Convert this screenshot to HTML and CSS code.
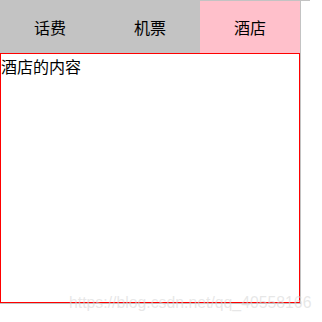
FILE: index.html
```html
<!DOCTYPE html>
<html lang="zh-CN">
<head>
    <meta charset="UTF-8">
    <title>Tab</title>
    <link rel="stylesheet" href="styles.css">
</head>
<body>
    <div class="top-line"></div>
    <div class="tab-box">
        <ul class="tab-list">
            <li class="tab">话费</li>
            <li class="tab">机票</li>
            <li class="tab active">酒店</li>
        </ul>
        <div class="tab-content">酒店的内容</div>
    </div>
    <div class="watermark">https://blog.csdn.net/qq_40558166</div>
</body>
</html>
```

FILE: styles.css
```css
body {
    margin: 0;
    font-family: "Noto Sans CJK SC", "Microsoft YaHei", sans-serif;
    font-size: 16px;
    color: #000;
    background: #fff;
}

.top-line {
    width: 310px;
    height: 1px;
    background-color: #c3c3c3;
}

.tab-box {
    width: 300px;
    border-right: 1px solid #c3c3c3;
    border-bottom: 1px solid #c3c3c3;
}

.tab-list {
    display: flex;
    margin: 0;
    padding: 0;
    list-style: none;
    background-color: #c3c3c3;
}

.tab {
    width: 100px;
    height: 52px;
    line-height: 52px;
    text-align: center;
}

.tab.active {
    background-color: pink;
}

.tab-content {
    height: 248px;
    border: 1px solid red;
    line-height: 24px;
}

/* blog watermark over the bottom edge */
.watermark {
    position: absolute;
    left: 69px;
    top: 294px;
    font-family: "Liberation Sans", Arial, sans-serif;
    font-size: 15.8px;
    line-height: 18px;
    color: rgba(215, 215, 215, 0.6);
    white-space: nowrap;
}
```
